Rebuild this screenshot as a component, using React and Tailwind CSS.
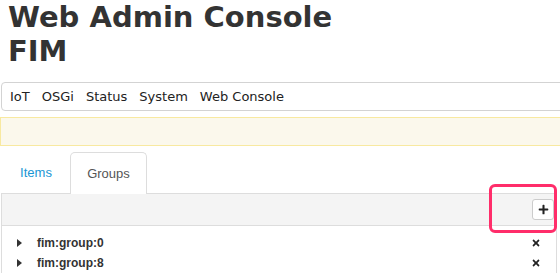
import { FaPlus, FaTimes } from "react-icons/fa"

const groups = ["fim:group:0", "fim:group:8"]

const App = () => {
    return (
        <div className="w-[560px] h-[280px] overflow-hidden bg-white relative">
            <h1 className="pl-2 text-[29px] leading-[34px] font-bold text-[#333] font-['DejaVu_Sans',sans-serif]">
                Web Admin Console<br />FIM
            </h1>
            <div className="mt-[14px] ml-[1px] w-[580px] h-[29px] border border-[#d3d3d3] rounded-l-[4px] flex items-center gap-[12px] pl-[8px] text-[13px] text-[#222] font-['DejaVu_Sans',sans-serif]">
                <span>IoT</span>
                <span>OSGi</span>
                <span>Status</span>
                <span>System</span>
                <span>Web Console</span>
            </div>
            <div className="mt-[6px] w-[580px] h-[29px] border border-[#f8e9a0] bg-[#fbf8ec]"></div>
            <div className="mt-[6px] w-[557px] font-['Liberation_Sans',Arial,sans-serif]">
                <div className="flex h-[41px] pl-[2px]">
                    <div className="w-[68px] flex items-center justify-center text-[13px] text-[#1a96d4]">Items</div>
                    <div className="w-[77px] -mb-[1px] bg-white border border-[#ddd] border-b-0 rounded-t-[5px] flex items-center justify-center text-[13px] text-[#555] relative z-10">Groups</div>
                </div>
                <div className="ml-[1px] border-l border-r border-[#ddd]">
                    <div className="h-[33px] bg-[#f4f4f4] border-t border-b border-[#ddd] flex items-center justify-end pr-[2px]">
                        <button className="w-[22px] h-[21px] bg-white border border-[#ccc] rounded-[3px] flex items-center justify-center text-[#222]">
                            <FaPlus className="text-[11px]" />
                        </button>
                    </div>
                    <div className="pt-[7px]">
                        {groups.map((g) => (
                            <div key={g} className="h-[20px] flex items-center text-[12px] font-bold text-[#333]">
                                <svg width="5" height="8" viewBox="0 0 5 8" className="ml-[15px] mr-[15px]">
                                    <path d="M0 0 L5 4 L0 8 Z" fill="#333" />
                                </svg>
                                <span className="flex-1">{g}</span>
                                <FaTimes className="text-[10px] text-[#222] mr-[15px]" />
                            </div>
                        ))}
                    </div>
                </div>
            </div>
            <div className="absolute left-[489px] top-[184px] w-[68px] h-[49px] border-[3px] border-[#ff2d6a] rounded-[6px]"></div>
        </div>
    )
}

export default App
